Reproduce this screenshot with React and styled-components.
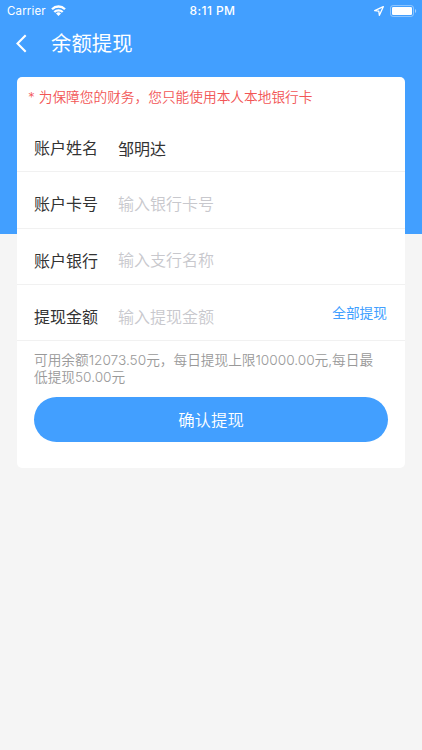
import React from 'react'
import styled, { createGlobalStyle } from 'styled-components'

const Color = {
    primary: '#429fff',
    page: '#f5f5f5',
    line: '#f1f1f1',
    text: '#333333',
    hint: '#999999',
    placeholder: '#c8c8cd',
    warning: '#f25555',
}

function App() {

    const Fields = [
        { label: "账户姓名", value: "邹明达" },
        { label: "账户卡号", placeholder: "输入银行卡号" },
        { label: "账户银行", placeholder: "输入支行名称" },
        { label: "提现金额", placeholder: "输入提现金额", action: "全部提现" },
    ]

    return (
        <Container>
            <GlobalStyle />
            <StatusBar>
                <Carrier>
                    <span>Carrier</span>
                    <WifiIcon />
                </Carrier>
                <Time>8:11 PM</Time>
                <Indicators>
                    <LocationIcon />
                    <BatteryIcon />
                </Indicators>
            </StatusBar>

            <NavBar>
                <BackIcon />
                <Title>余额提现</Title>
            </NavBar>

            <Card>
                <Warning>* 为保障您的财务，您只能使用本人本地银行卡</Warning>
                {
                    Fields.map((item) => {
                        return <Row key={item.label}>
                            <Label>{item.label}</Label>
                            <Input
                                aria-label={item.label}
                                defaultValue={item.value}
                                placeholder={item.placeholder}
                            />
                            {item.action && <Action>{item.action}</Action>}
                        </Row>
                    })
                }
                <Hint>可用余额12073.50元，每日提现上限10000.00元,每日最低提现50.00元</Hint>
                <Button>确认提现</Button>
            </Card>
        </Container>
    )
}

export default App

const WifiIcon = () => (
    <svg width="15" height="11" viewBox="0 0 15 11" fill="none" stroke="#fff" strokeWidth="2.3">
        <path d="M1 4.2a9.2 9.2 0 0 1 13 0" />
        <path d="M3.3 7a6 6 0 0 1 8.4 0" />
        <path d="M7.5 11 5 8.6a3.5 3.5 0 0 1 5 0z" fill="#fff" stroke="none" />
    </svg>
)

const LocationIcon = () => (
    <svg width="10" height="10" viewBox="0 0 10 10" fill="none" stroke="#fff" strokeWidth="1.3" strokeLinejoin="round">
        <path d="M9.3.7.7 4.7l4.1.5.6 4.1z" />
    </svg>
)

const BatteryIcon = () => (
    <svg width="27" height="12" viewBox="0 0 27 12">
        <rect x="0.5" y="0.5" width="23" height="11" rx="2.6" fill="none" stroke="#fff" strokeOpacity="0.4" />
        <rect x="2" y="2" width="20" height="8" rx="1.3" fill="#fff" />
        <path d="M25 4c1.6.6 1.6 3.4 0 4z" fill="#fff" fillOpacity="0.5" />
    </svg>
)

const BackIcon = () => (
    <svg width="11" height="19" viewBox="0 0 11 19" fill="none" stroke="#fff" strokeWidth="2.1">
        <path d="M9.7 1.2 1.5 9.5l8.2 8.3" />
    </svg>
)

const GlobalStyle = createGlobalStyle`
    * {
        box-sizing: border-box;
    }
    body {
        margin: 0;
        font-family: Inter, "Noto Sans CJK SC", sans-serif;
        color: ${Color.text};
    }
`

const Container = styled.div`
    height: 750px;
    overflow: hidden;
    background: linear-gradient(${Color.primary} 234px, ${Color.page} 234px);
`

const StatusBar = styled.div`
    display: grid;
    grid-template-columns: 1fr auto 1fr;
    align-items: center;
    height: 21px;
    padding: 0 5px 0 7px;
    color: #fff;
    font-size: 11.5px;
`

const Carrier = styled.div`
    display: flex;
    align-items: center;
    gap: 5px;
    letter-spacing: 0.15px;
`

const Time = styled.div`
    padding-left: 1px;
    font-weight: 500;
    font-size: 12px;
    letter-spacing: 0.4px;
`

const Indicators = styled.div`
    display: flex;
    align-items: center;
    justify-content: flex-end;
    gap: 6px;
`

const NavBar = styled.div`
    display: flex;
    align-items: center;
    gap: 24px;
    height: 44px;
    padding-left: 16px;
`

const Title = styled.h1`
    margin: 0;
    padding-top: 1px;
    color: #fff;
    font-size: 20.4px;
    font-weight: 400;
    line-height: 42px;
`

const Card = styled.div`
    height: 391px;
    margin: 12px 17px 0;
    background: #fff;
    border-radius: 5px;
`

const Warning = styled.p`
    margin: 0;
    padding: 1px 0 0 11px;
    color: ${Color.warning};
    font-size: 13.7px;
    font-weight: 350;
    line-height: 38px;
`

const Row = styled.div`
    display: flex;
    align-items: center;
    height: 56.3px;
    padding: 7px 17px 0;
    border-bottom: 1px solid ${Color.line};
`

const Label = styled.label`
    width: 84px;
    font-size: 16px;
`

const Input = styled.input`
    flex: 1;
    min-width: 0;
    padding: 1px 0 0;
    border: 0;
    outline: 0;
    background: none;
    color: ${Color.text};
    font-family: inherit;
    font-size: 16px;

    &::placeholder {
        color: ${Color.placeholder};
        font-weight: 350;
    }
`

const Action = styled.span`
    margin: 0 1px 8px 0;
    color: ${Color.primary};
    font-size: 13.7px;
`

const Hint = styled.p`
    margin: 0;
    padding: 11px 24px 0 17px;
    color: ${Color.hint};
    font-size: 13.7px;
    font-weight: 350;
    letter-spacing: -0.02px;
    line-height: 16.5px;
`

const Button = styled.button`
    display: block;
    width: 354px;
    height: 44.5px;
    margin: 12px auto 0;
    padding: 0;
    border: 0;
    border-radius: 23px;
    background: ${Color.primary};
    color: #fff;
    font-family: inherit;
    font-size: 16.4px;
    font-weight: 350;
`
